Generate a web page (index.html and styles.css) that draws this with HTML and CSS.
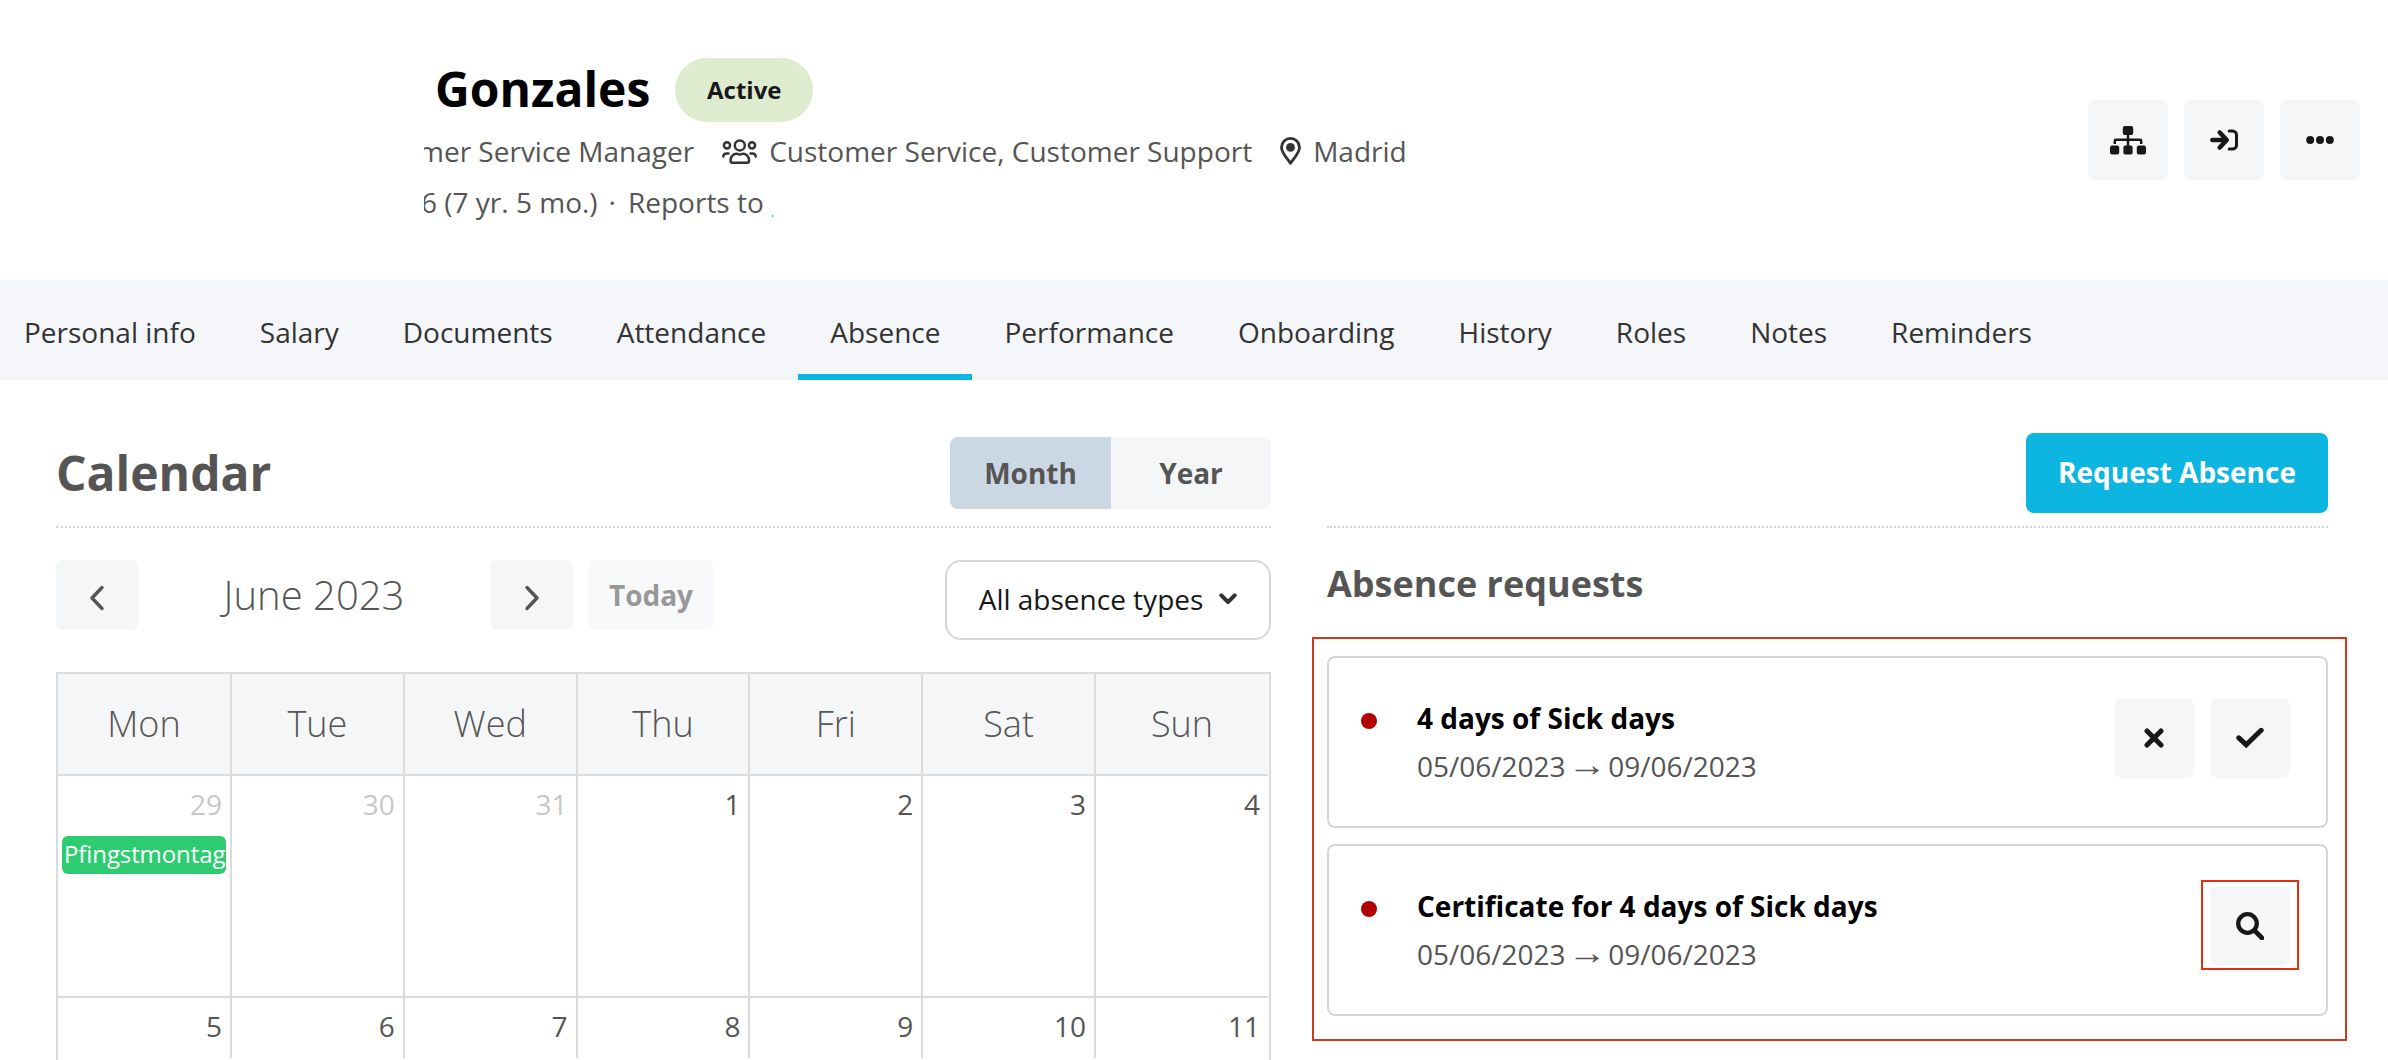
FILE: index.html
```html
<!DOCTYPE html>
<html lang="en">
<head>
    <meta charset="UTF-8">
    <meta name="viewport" content="width=device-width, initial-scale=1.0">
    <title>Gonzales - Absence</title>
    <link rel="stylesheet" href="styles.css">
</head>
<body>
    <header class="profile">
        <div class="profile-info">
            <div class="profile-title">
                <h1>Gonzales</h1>
                <span class="badge">Active</span>
            </div>
            <div class="profile-line">
                <span class="position">mer Service Manager</span>
                <svg class="icon-team" width="35" height="25" viewBox="0 0 35 25" fill="none" stroke="#333" stroke-width="2.5" stroke-linecap="round" stroke-linejoin="round">
                    <circle cx="17.8" cy="6.4" r="5"/>
                    <circle cx="5" cy="6.3" r="3.1"/>
                    <circle cx="30" cy="6.3" r="3.1"/>
                    <path d="M8.6 22v-1.2a6 6 0 0 1 6-6c1.2 0 1.8.6 3.2.6s2-.6 3.2-.6a6 6 0 0 1 6 6V22a1.7 1.7 0 0 1-1.7 1.7h-15A1.7 1.7 0 0 1 8.6 22z"/>
                    <path d="M1.3 17.6c0-2 1.4-3.2 3.2-3.2h2M33.7 17.6c0-2-1.4-3.2-3.2-3.2h-2"/>
                </svg>
                <span>Customer Service, Customer Support</span>
                <svg class="icon-pin" width="21" height="28" viewBox="0 0 21 28">
                    <path d="M10.5 26.4C8.6 23 1.5 16 1.5 10.4a9 9 0 0 1 18 0C19.5 16 12.4 23 10.5 26.4z" fill="none" stroke="#333" stroke-width="2.8" stroke-linejoin="round"/>
                    <circle cx="10.5" cy="10.4" r="4.4" fill="#333"/>
                </svg>
                <span>Madrid</span>
            </div>
            <div class="profile-line">
                <span class="tenure">6 (7 yr. 5 mo.)</span>
                <span class="separator">·</span>
                <span>Reports to</span>
                <i class="manager-link"></i>
            </div>
        </div>
        <div class="profile-actions">
            <button class="icon-btn" aria-label="Org chart">
                <svg width="36" height="29" viewBox="0 0 36 29" fill="#16181a">
                    <rect x="12.8" width="10.4" height="8.9" rx="2"/>
                    <rect y="19.4" width="9.2" height="9.2" rx="2"/>
                    <rect x="13.4" y="19.4" width="9.2" height="9.2" rx="2"/>
                    <rect x="26.8" y="19.4" width="9.2" height="9.2" rx="2"/>
                    <path d="M18 8v12M4.8 18v-3a1.2 1.2 0 0 1 1.2-1.2h24a1.2 1.2 0 0 1 1.2 1.2v3" fill="none" stroke="#16181a" stroke-width="2.5"/>
                </svg>
            </button>
            <button class="icon-btn" aria-label="Log in as">
                <svg width="28" height="22" viewBox="0 0 28 22" fill="none" stroke="#16181a" stroke-linecap="round" stroke-linejoin="round">
                    <path d="M2.3 11H16M9.7 3.5L16.8 11L9.7 18.5" stroke-width="4.5"/>
                    <path d="M19.2 2h3.3a4 4 0 0 1 4 4v10a4 4 0 0 1-4 4h-3.3" stroke-width="3"/>
                </svg>
            </button>
            <button class="icon-btn" aria-label="More">
                <svg width="28" height="8" viewBox="0 0 28 8" fill="#16181a">
                    <circle cx="4.2" cy="4" r="4"/>
                    <circle cx="14" cy="4" r="4"/>
                    <circle cx="23.8" cy="4" r="4"/>
                </svg>
            </button>
        </div>
    </header>

    <nav class="tabs">
        <a class="tab">Personal info</a>
        <a class="tab">Salary</a>
        <a class="tab">Documents</a>
        <a class="tab">Attendance</a>
        <a class="tab active">Absence</a>
        <a class="tab">Performance</a>
        <a class="tab">Onboarding</a>
        <a class="tab">History</a>
        <a class="tab">Roles</a>
        <a class="tab">Notes</a>
        <a class="tab">Reminders</a>
    </nav>

    <main class="content">
        <section>
            <div class="section-head">
                <h2>Calendar</h2>
                <div class="toggle">
                    <button class="toggle-btn selected">Month</button>
                    <button class="toggle-btn">Year</button>
                </div>
            </div>

            <div class="calendar-bar">
                <button class="bar-btn prev" aria-label="Previous month">
                    <svg width="16" height="26" viewBox="0 0 16 26" fill="none" stroke="#555" stroke-width="3.4" stroke-linecap="round" stroke-linejoin="round"><path d="M13 2.5L3 13L13 23.5"/></svg>
                </button>
                <span class="month">June 2023</span>
                <button class="bar-btn next" aria-label="Next month">
                    <svg width="16" height="26" viewBox="0 0 16 26" fill="none" stroke="#555" stroke-width="3.4" stroke-linecap="round" stroke-linejoin="round"><path d="M3 2.5L13 13L3 23.5"/></svg>
                </button>
                <button class="bar-btn today">Today</button>
                <button class="select">
                    All absence types
                    <svg width="18" height="12" viewBox="0 0 18 12" fill="none" stroke="#333" stroke-width="4" stroke-linecap="round" stroke-linejoin="round"><path d="M2.3 2.3L9 9L15.7 2.3"/></svg>
                </button>
            </div>

            <div class="calendar">
                <div class="week weekdays">
                    <div>Mon</div><div>Tue</div><div>Wed</div><div>Thu</div><div>Fri</div><div>Sat</div><div>Sun</div>
                </div>
                <div class="week days">
                    <div class="other">29<span class="event">Pfingstmontag</span></div>
                    <div class="other">30</div>
                    <div class="other">31</div>
                    <div>1</div>
                    <div>2</div>
                    <div>3</div>
                    <div>4</div>
                </div>
                <div class="week days last">
                    <div>5</div>
                    <div>6</div>
                    <div>7</div>
                    <div>8</div>
                    <div>9</div>
                    <div>10</div>
                    <div>11</div>
                </div>
            </div>
        </section>

        <section>
            <div class="section-head right">
                <button class="primary">Request Absence</button>
            </div>
            <h3>Absence requests</h3>
            <div class="requests">
                <div class="request">
                    <span class="dot"></span>
                    <div class="request-text">
                        <strong>4 days of Sick days</strong>
                        <span>05/06/2023 <span class="arrow">→</span> 09/06/2023</span>
                    </div>
                    <div class="request-actions">
                        <button class="icon-btn" aria-label="Reject">
                            <svg width="20" height="20" viewBox="0 0 20 20" fill="none" stroke="#16181a" stroke-width="5" stroke-linecap="round"><path d="M3 3L17 17M17 3L3 17"/></svg>
                        </button>
                        <button class="icon-btn" aria-label="Approve">
                            <svg width="28" height="22" viewBox="0 0 28 22" fill="none" stroke="#16181a" stroke-width="5" stroke-linecap="round"><path d="M2.8 10.8L10.2 17.7L25.2 3.3"/></svg>
                        </button>
                    </div>
                </div>
                <div class="request">
                    <span class="dot"></span>
                    <div class="request-text">
                        <strong>Certificate for 4 days of Sick days</strong>
                        <span>05/06/2023 <span class="arrow">→</span> 09/06/2023</span>
                    </div>
                    <div class="request-actions">
                        <button class="icon-btn highlighted" aria-label="View">
                            <svg width="28" height="28" viewBox="0 0 28 28" fill="none" stroke="#16181a" stroke-width="4.3"><circle cx="11.5" cy="11.5" r="9.3"/><path d="M18.5 18.5L26 26" stroke-width="4.6" stroke-linecap="round"/></svg>
                        </button>
                    </div>
                </div>
            </div>
        </section>
    </main>
</body>
</html>
```

FILE: styles.css
```css
* {
    box-sizing: border-box;
}
body {
    margin: 0;
    height: 1060px;
    overflow: hidden;
    font-family: "Open Sans", "Noto Sans", sans-serif;
    font-size: 28px;
    color: #555;
    background: #fff;
}
h1, h2, h3 {
    margin: 0;
    font-weight: 700;
}
button {
    display: flex;
    align-items: center;
    justify-content: center;
    padding: 0;
    border: none;
    font: inherit;
    color: inherit;
    cursor: pointer;
}
svg {
    display: block;
    flex: none;
}

/* profile header */
.profile {
    display: flex;
    justify-content: space-between;
    height: 280px;
    padding: 58px 28px 0 424px;
}
.profile-info {
    overflow: hidden;
    white-space: nowrap;
}
.profile-title {
    display: flex;
    height: 64px;
    margin: 0 0 4px 11px;
    gap: 25px;
}
.profile-title h1 {
    font-size: 48px;
    line-height: 62px;
    color: #000;
}
.badge {
    width: 138px;
    border-radius: 32px;
    background: #deebcf;
    color: #16181a;
    font-size: 24px;
    font-weight: 700;
    line-height: 64px;
    text-align: center;
}
.profile-line {
    display: flex;
    line-height: 51px;
}
.position {
    margin-left: -6px;
}
.icon-team {
    margin: 13px 12px 0 28px;
}
.icon-pin {
    margin: 11px 12px 0 28px;
}
.tenure {
    margin-left: -3px;
}
.separator {
    margin: 0 12px 0 11px;
}
.manager-link {
    width: 1px;
    height: 2px;
    margin: 38px 0 0 8px;
    background: #0db5e1;
}
.profile-actions {
    display: flex;
    gap: 16px;
    padding-top: 42px;
}
.icon-btn {
    width: 80px;
    height: 80px;
    border-radius: 8px;
    background: #f5f6f8;
}

/* tabs */
.tabs {
    display: flex;
    height: 100px;
    background: #f5f6f9;
    line-height: 104px;
    color: #333;
}
.tab {
    height: 100px;
    padding: 0 32px;
}
.tab:first-child {
    padding-left: 24px;
}
.tab.active {
    box-shadow: inset 0 -6px #0db5e1;
}

/* content */
.content {
    display: grid;
    grid-template-columns: 1215px 1001px;
    gap: 56px;
    padding-left: 56px;
}
.section-head {
    display: flex;
    align-items: center;
    justify-content: space-between;
    height: 148px;
    padding-top: 40px;
    border-bottom: 2px dotted #d3d4d6;
}
.section-head.right {
    justify-content: flex-end;
}
h2 {
    padding-bottom: 2px;
    font-size: 48px;
}
.toggle {
    display: flex;
    border-radius: 8px;
    overflow: hidden;
}
.toggle-btn {
    width: 160px;
    height: 72px;
    background: #f5f6f8;
    font-weight: 700;
}
.toggle-btn.selected {
    width: 161px;
    background: #cbd8e3;
}
.primary {
    width: 302px;
    height: 80px;
    padding-bottom: 2px;
    border-radius: 8px;
    background: #0db5e1;
    color: #fff;
    font-weight: 700;
}

/* calendar */
.calendar-bar {
    display: flex;
    height: 80px;
    margin: 32px 0;
}
.bar-btn {
    width: 83px;
    height: 70px;
    padding-top: 6px;
    border-radius: 6px;
    background: #f5f6f8;
}
.bar-btn.prev {
    width: 82px;
}
.bar-btn.today {
    width: 124px;
    margin-left: 16px;
    padding: 0;
    font-weight: 700;
    opacity: 0.6;
}
.month {
    width: 352px;
    font-size: 40px;
    font-weight: 300;
    line-height: 70px;
    text-align: center;
}
.select {
    gap: 16px;
    width: 326px;
    height: 80px;
    margin-left: auto;
    padding-bottom: 2px;
    border: 2px solid #d6d7d9;
    border-radius: 16px;
    background: #fff;
    color: #16181a;
}
.calendar {
    height: 388px;
    padding-right: 1px;
    border: 2px solid #d9dbdd;
    border-bottom: none;
}
.week {
    display: grid;
    grid-template-columns: 174px repeat(5, 172.8px) 1fr;
    border-bottom: 2px solid #d9dbdd;
}
.week > div {
    border-right: 2px solid #d9dbdd;
}
.week > div:last-child {
    border-right: none;
}
.weekdays {
    height: 102px;
    background: #f5f6f8;
    font-size: 36px;
    font-weight: 300;
    line-height: 100px;
    text-align: center;
}
.days {
    height: 222px;
    line-height: 56px;
    text-align: right;
}
.days > div {
    padding-right: 8px;
}
.days.last {
    height: 60px;
    border-bottom: none;
}
.other {
    color: #c8c8c8;
}
.event {
    display: block;
    height: 38px;
    margin: 4px -4px 0 4px;
    padding-left: 2px;
    border-radius: 6px;
    overflow: hidden;
    background: #2ecc71;
    color: #fff;
    font-size: 24px;
    letter-spacing: -0.1px;
    line-height: 36px;
    text-align: left;
}

/* absence requests */
h3 {
    height: 109px;
    font-size: 36px;
    line-height: 111px;
}
.requests {
    display: flex;
    flex-direction: column;
    gap: 16px;
    margin: 0 -19px 0 -15px;
    padding: 17px 17px 23px 13px;
    border: 2px solid #cc3c1c;
}
.request {
    display: flex;
    align-items: flex-start;
    height: 172px;
    padding: 36px 36px 0 32px;
    border: 2px solid #d4d5d7;
    border-radius: 8px;
}
.dot {
    width: 16px;
    height: 16px;
    margin: 19px 40px 0 0;
    border-radius: 50%;
    background: #b30000;
}
.request-text {
    display: flex;
    flex: 1;
    flex-direction: column;
    line-height: 48px;
}
.request-text strong {
    color: #000;
}
.arrow {
    display: inline-block;
    font-family: "Liberation Serif", serif;
    line-height: 1;
    transform: translateY(-3px) scale(1.4, 1.2);
}
.request-actions {
    display: flex;
    gap: 16px;
    padding-top: 4px;
}
.highlighted {
    position: relative;
}
.highlighted::after {
    content: "";
    position: absolute;
    inset: -6px -9px -4px;
    border: 2px solid #e0310f;
}
```
